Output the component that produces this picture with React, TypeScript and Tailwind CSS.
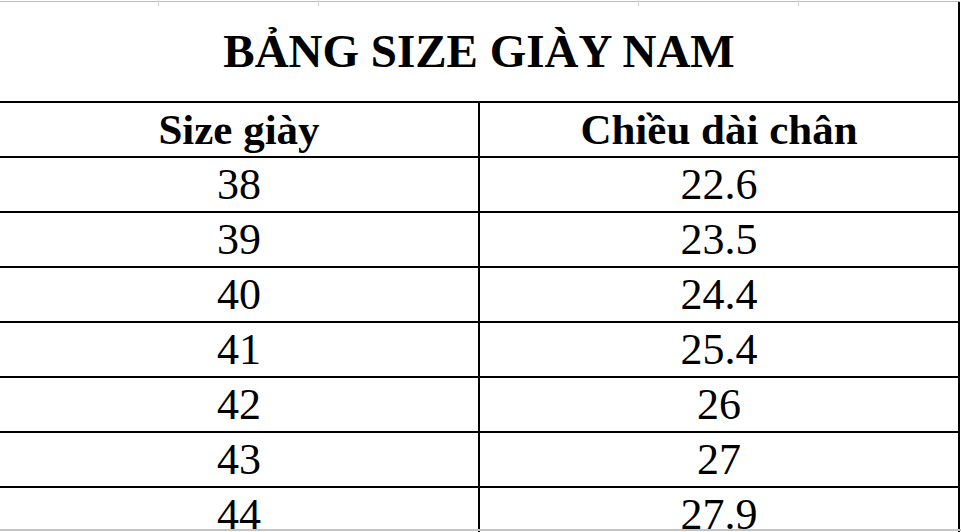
const rows: [string, string][] = [
  ['38', '22.6'],
  ['39', '23.5'],
  ['40', '24.4'],
  ['41', '25.4'],
  ['42', '26'],
  ['43', '27'],
  ['44', '27.9'],
]

export default function App() {
  return (
    <div
      className="relative h-[532px] w-[961px] overflow-hidden bg-white text-black"
      style={{ fontFamily: '"Liberation Serif", "Times New Roman", serif' }}
    >
      {/* sheet gridline ticks above the merged title cell */}
      <div className="absolute left-0 top-0 flex h-[6px] w-[960px]">
        {[158, 318, 638, 798].map(x => (
          <div
            key={x}
            className="absolute top-0 h-[6px] w-px bg-[#d4d4d4]"
            style={{ left: x }}
          />
        ))}
      </div>
      <div className="h-px w-full" />
      <div className="h-px w-[960px] bg-[#bdbdbd]" />
      <div className="w-[960px] border-r-2 border-black">
        <div className="flex h-[99px] items-center justify-center">
          <h1 className="text-[47px] font-bold leading-[47px]">
            BẢNG SIZE GIÀY NAM
          </h1>
        </div>
        <div className="flex h-[55px] border-t-2 border-black">
          <div className="flex w-[478px] justify-center text-[43px] font-bold leading-[53px]">
            Size giày
          </div>
          <div className="flex w-[480px] justify-center border-l-2 border-black text-[43px] font-bold leading-[53px]">
            Chiều dài chân
          </div>
        </div>
        {rows.map(([size, length]) => (
          <div key={size} className="flex h-[55px] border-t-2 border-black">
            <div className="flex w-[478px] justify-center text-[44px] leading-[53px]">
              {size}
            </div>
            <div className="flex w-[480px] justify-center border-l-2 border-black text-[44px] leading-[53px]">
              {length}
            </div>
          </div>
        ))}
      </div>
      <div className="absolute left-0 top-[529px] h-[2px] w-[961px] bg-[#c4c4c4]" />
    </div>
  )
}
